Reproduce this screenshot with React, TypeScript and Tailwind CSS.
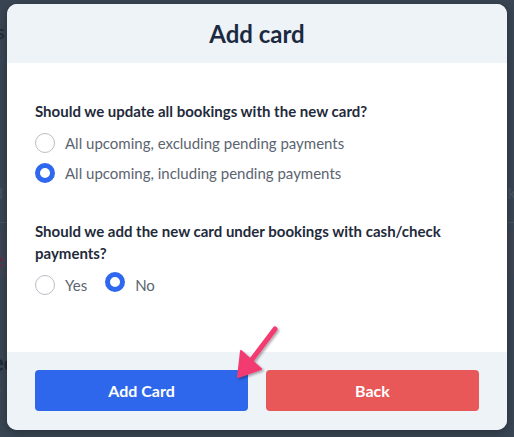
import React from "react";

const font = { fontFamily: "Lato, 'Noto Sans', sans-serif" };

function Radio({ checked }: { checked?: boolean }) {
  return checked ? (
    <span className="box-border inline-block h-[20px] w-[20px] shrink-0 rounded-full border-[5.5px] border-[#2f68ee] bg-white" />
  ) : (
    <span className="box-border inline-block h-[20px] w-[20px] shrink-0 rounded-full border border-[#b9bec5] bg-white" />
  );
}

export default function App() {
  return (
    <div className="relative h-[437px] w-[514px] overflow-hidden bg-[#394553]" style={font}>
      {/* background page (dimmed) */}
      <div className="flex h-full flex-col text-[#23303d]">
        <div className="h-[20px]" />
        <div className="-ml-[4px] text-[20px] leading-[22px] text-[#1f2a36]">s</div>
        <div className="h-[139px]" />
        <div className="flex justify-between text-[16px] leading-[24px] text-[#4a5563]">
          <span className="-ml-[6px]">d</span>
          <span className="-mr-[2px]">ak</span>
        </div>
        <div className="h-[17px]" />
        <div className="h-px bg-[#45515e]" />
        <div className="h-[9px]" />
        <div className="flex h-[43px] items-center bg-[#3d4452] text-[18px] text-[#6a2a3a]">
          <span className="-ml-[6px] mt-[12px]">e</span>
        </div>
        <div className="h-[74px]" />
        <div className="-ml-[8px] text-[22px] font-bold leading-[28px] text-[#1d2833]">ec</div>
        <div className="-ml-[8px] text-[16px] leading-[22px] text-[#4a5563]">o</div>
      </div>

      {/* modal */}
      <div className="absolute left-[7px] top-[4px] flex h-[426px] w-[500px] flex-col overflow-hidden rounded-[10px] bg-white shadow-[0_2px_10px_rgba(0,0,0,0.3)]">
        <div className="flex h-[59px] shrink-0 items-center justify-center bg-[#eef3f8]">
          <h2 className="text-[24px] font-bold leading-[30px] text-[#1b2a40]">Add card</h2>
        </div>
        <div className="flex flex-1 flex-col px-[28px] pt-[37px]">
          <p className="text-[15px] font-bold leading-[22px] text-[#1f2b3b]">
            Should we update all bookings with the new card?
          </p>
          <div className="mt-[6px] flex h-[30px] items-center gap-[10px]">
            <Radio />
            <span className="text-[15px] leading-[22px] text-[#5b6470]">
              All upcoming, excluding pending payments
            </span>
          </div>
          <div className="flex h-[30px] items-center gap-[10px]">
            <Radio checked />
            <span className="text-[15px] leading-[22px] text-[#5b6470]">
              All upcoming, including pending payments
            </span>
          </div>
          <p className="mt-[32px] text-[15px] font-bold leading-[22px] text-[#1f2b3b]">
            Should we add the new card under bookings with cash/check payments?
          </p>
          <div className="mt-[6px] flex h-[30px] items-center">
            <Radio />
            <span className="ml-[10px] text-[15px] leading-[22px] text-[#5b6470]">Yes</span>
            <span className="ml-[18px]">
              <Radio checked />
            </span>
            <span className="ml-[10px] text-[15px] leading-[22px] text-[#5b6470]">No</span>
          </div>
        </div>
        <div className="flex h-[78px] shrink-0 gap-[18px] bg-[#eef3f8] px-[28px] pt-[18px]">
          <button className="h-[41px] flex-1 rounded-[4px] bg-[#2e67ec] text-[16px] font-bold text-white">
            Add Card
          </button>
          <button className="h-[41px] flex-1 rounded-[4px] bg-[#e85858] text-[16px] font-bold text-white">
            Back
          </button>
        </div>
      </div>

      {/* annotation arrow */}
      <svg className="pointer-events-none absolute left-[228px] top-[322px]" width="60" height="66" viewBox="0 0 60 66">
        <defs>
          <filter id="sh" x="-30%" y="-30%" width="160%" height="160%">
            <feDropShadow dx="1.5" dy="1.5" stdDeviation="1.2" floodColor="#000" floodOpacity="0.35" />
          </filter>
        </defs>
        <g filter="url(#sh)">
          <line x1="47" y1="7" x2="22" y2="40" stroke="#f23a70" strokeWidth="5" strokeLinecap="round" />
          <polygon points="10,55 13,29 33,47" fill="#f23a70" stroke="#f23a70" strokeWidth="2" strokeLinejoin="round" />
        </g>
      </svg>
    </div>
  );
}
